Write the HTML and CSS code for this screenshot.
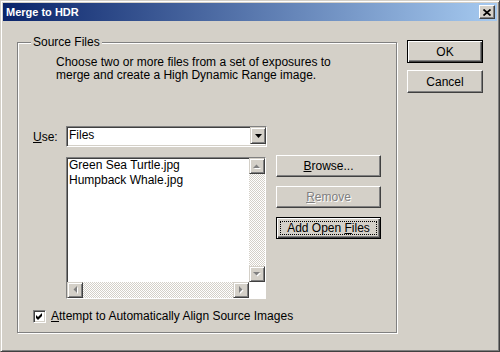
FILE: index.html
```html
<html>
<head>
<meta http-equiv="Content-Type" content="text/html; charset=utf-8" />
<title>Merge to HDR</title>
<link rel="stylesheet" href="styles.css">
</head>
<body>
<div class="window">
	<div class="titlebar">
		<span class="title">Merge to HDR</span>
		<span class="close-btn">
			<svg width="8" height="7" viewBox="0 0 8 7"><path d="M0.5 0.5L7.5 6.5M7.5 0.5L0.5 6.5" stroke="#000" stroke-width="1.7"/></svg>
		</span>
	</div>
	<div class="client">
		<fieldset class="group">
			<legend>Source Files</legend>
			<p class="desc">Choose two or more files from a set of exposures to<br>merge and create a High Dynamic Range image.</p>
			<div class="use-row">
				<span class="use-label"><u>U</u>se:</span>
				<div class="combo sunken">
					<span class="combo-text">Files</span>
					<span class="drop-btn raised">
						<svg width="7" height="4" viewBox="0 0 7 4"><polygon points="0,0 7,0 3.5,4" fill="#000"/></svg>
					</span>
				</div>
			</div>
			<div class="files-row">
				<div class="listbox sunken">
					<div class="list-main">
						<div class="list-items">
							<div>Green Sea Turtle.jpg</div>
							<div>Humpback Whale.jpg</div>
						</div>
						<div class="vscroll">
							<span class="arrow-btn raised">
								<svg width="8" height="5" viewBox="0 0 8 5"><polygon points="1,5 8,5 4.5,1.5" fill="#fff"/><polygon points="0,4 7,4 3.5,0.5" fill="#808080"/></svg>
							</span>
							<span class="track"></span>
							<span class="arrow-btn raised">
								<svg width="8" height="5" viewBox="0 0 8 5"><polygon points="1,1 8,1 4.5,4.5" fill="#fff"/><polygon points="0,0 7,0 3.5,3.5" fill="#808080"/></svg>
							</span>
						</div>
					</div>
					<div class="hscroll-row">
						<div class="hscroll">
							<span class="arrow-btn raised">
								<svg width="5" height="8" viewBox="0 0 5 8"><polygon points="5,1 5,8 1.5,4.5" fill="#fff"/><polygon points="4,0 4,7 0.5,3.5" fill="#808080"/></svg>
							</span>
							<span class="track"></span>
							<span class="arrow-btn raised">
								<svg width="5" height="8" viewBox="0 0 5 8"><polygon points="1,1 1,8 4.5,4.5" fill="#fff"/><polygon points="0,0 0,7 3.5,3.5" fill="#808080"/></svg>
							</span>
						</div>
						<div class="corner"></div>
					</div>
				</div>
				<div class="file-buttons">
					<button class="btn wide"><u>B</u>rowse...</button>
					<button class="btn wide disabled"><u>R</u>emove</button>
					<button class="btn wide default focused">Add Open <u>F</u>iles</button>
				</div>
			</div>
			<label class="check-row">
				<span class="checkbox sunken">
					<svg width="7" height="7" viewBox="0 0 7 7"><polygon points="0,2 2,4 6,0 6,3 2,7 0,5" fill="#000"/></svg>
				</span>
				<span><u>A</u>ttempt to Automatically Align Source Images</span>
			</label>
		</fieldset>
		<div class="dialog-buttons">
			<button class="btn dlg default">OK</button>
			<button class="btn dlg">Cancel</button>
		</div>
	</div>
</div>
</body>
</html>
```

FILE: styles.css
```css
*{
	box-sizing:border-box;
}
body{
	margin:0;
	background:#d4d0c8;
	font-family:"Liberation Sans", Arial, sans-serif;
	font-size:12px;
	color:#000;
}
.window{
	width:500px;
	height:352px;
	padding:2px;
	border:1px solid;
	border-color:#d4d0c8 #404040 #404040 #d4d0c8;
	box-shadow:inset 1px 1px #fff, inset -1px -1px #808080;
	display:flex;
	flex-direction:column;
}
.titlebar{
	height:18px;
	flex:none;
	display:flex;
	align-items:center;
	justify-content:space-between;
	padding:0 2px 0 3px;
	background:linear-gradient(to right, #0a246a, #a6caf0);
}
.title{
	color:#fff;
	font-weight:bold;
	font-size:11px;
}
.close-btn{
	width:16px;
	height:14px;
	display:flex;
	align-items:center;
	justify-content:center;
	background:#d4d0c8;
	border:1px solid;
	border-color:#fff #404040 #404040 #fff;
	box-shadow:inset -1px -1px #808080;
}

.raised{
	background:#d4d0c8;
	border:1px solid;
	border-color:#d4d0c8 #404040 #404040 #d4d0c8;
	box-shadow:inset 1px 1px #fff, inset -1px -1px #808080;
}
.sunken{
	background:#fff;
	border:1px solid;
	border-color:#808080 #fff #fff #808080;
	box-shadow:inset 1px 1px #404040, inset -1px -1px #d4d0c8;
}

.client{
	flex:1;
	display:flex;
	gap:10px;
	padding:14px 14px 16px 14px;
}
.group{
	width:380px;
	margin:0;
	padding:0 15px;
	min-width:0;
	border:1px solid #808080;
	box-shadow:inset 1px 1px #fff, 1px 1px #fff;
}
.group legend{
	padding:0 2px;
	margin-left:-2px;
	line-height:14px;
	background:#d4d0c8;
}
.desc{
	margin:7px 0 0 23px;
	line-height:13px;
}

.use-row{
	display:flex;
	align-items:center;
	margin-top:44px;
}
.use-label{
	width:33px;
}
.combo{
	width:201px;
	height:21px;
	display:flex;
}
.combo-text{
	flex:1;
	padding-left:2px;
	line-height:17px;
}
.drop-btn{
	width:16px;
	height:17px;
	display:flex;
	align-items:center;
	justify-content:center;
}

.files-row{
	display:flex;
	align-items:flex-start;
	gap:10px;
	margin:10px 0 0 33px;
}
.listbox{
	width:201px;
	height:142px;
	display:flex;
	flex-direction:column;
}
.list-main{
	flex:1;
	display:flex;
	min-height:0;
}
.list-items{
	flex:1;
	padding-left:2px;
	line-height:15px;
}
.vscroll{
	width:16px;
	display:flex;
	flex-direction:column;
}
.hscroll-row{
	height:16px;
	display:flex;
}
.hscroll{
	flex:1;
	display:flex;
}
.track{
	flex:1;
	background:repeating-conic-gradient(#d4d0c8 0 25%, #fff 0 50%) 0 0 / 2px 2px;
}
.corner{
	width:16px;
	background:#fff;
}
.arrow-btn{
	width:16px;
	height:16px;
	flex:none;
	display:flex;
	align-items:center;
	justify-content:center;
}

.btn{
	font:inherit;
	color:#000;
	padding:0;
	background:#d4d0c8;
	border:1px solid;
	border-color:#fff #404040 #404040 #fff;
	box-shadow:inset -1px -1px #808080;
}
.btn.default{
	border-color:#000;
	box-shadow:inset 1px 1px #fff, inset -1px -1px #404040, inset -2px -2px #808080;
}
.btn.disabled{
	color:#808080;
	text-shadow:1px 1px #fff;
}
.btn.focused{
	position:relative;
}
.btn.focused::after{
	content:"";
	position:absolute;
	top:3px;
	left:3px;
	right:3px;
	bottom:3px;
	border:1px dotted #000;
}
.file-buttons{
	display:flex;
	flex-direction:column;
	gap:9px;
	margin-top:-2px;
}
.btn.wide{
	width:105px;
	height:22px;
}

.check-row{
	display:flex;
	align-items:flex-start;
	gap:5px;
	margin-top:10px;
	line-height:15px;
}
.checkbox{
	width:13px;
	height:13px;
	margin-top:1px;
	display:flex;
	align-items:center;
	justify-content:center;
}

.dialog-buttons{
	display:flex;
	flex-direction:column;
	gap:7px;
	margin-top:5px;
}
.btn.dlg{
	width:76px;
	height:23px;
}
```
